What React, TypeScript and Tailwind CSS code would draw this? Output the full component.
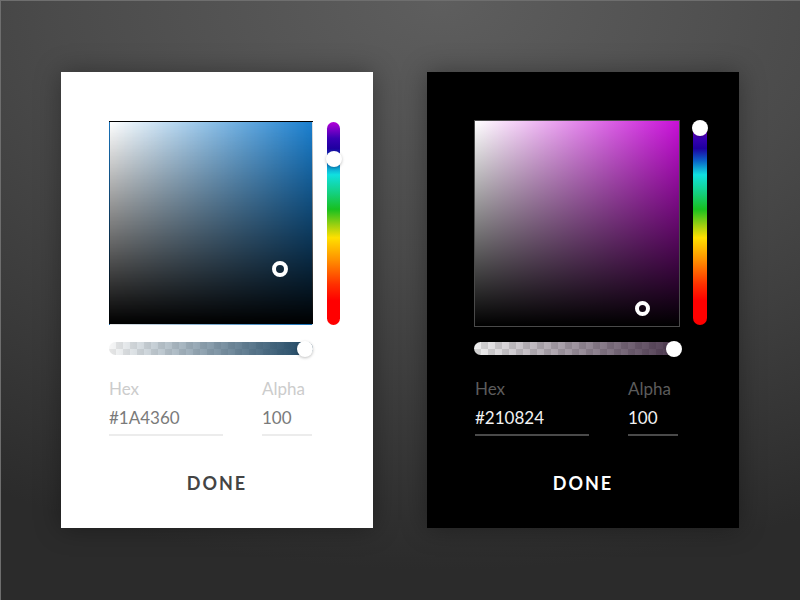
import React from "react";

type Theme = "light" | "dark";

type PickerProps = {
  theme: Theme;
  hex: string;
};

function ColorPicker({ theme, hex }: PickerProps) {
  const dark = theme === "dark";

  return (
    <div
      className={`w-[312px] h-[456px] flex flex-col shadow-[0_0_24px_rgba(0,0,0,0.35)] ${
        dark ? "bg-black pt-[48px] pl-[47px]" : "bg-white pt-[49px] pl-[48px]"
      }`}
    >
      {/* saturation square + hue bar */}
      <div className={`flex ${dark ? "gap-[13px]" : "gap-[14px]"}`}>
        {dark ? (
          <div className="relative w-[206px] h-[207px] border border-[#4a4a4a] [background-image:linear-gradient(to_top,#000,rgba(0,0,0,0)),linear-gradient(to_right,#fff,rgba(255,255,255,0)),linear-gradient(#c810d8,#c810d8)]">
            <div className="absolute left-[160px] top-[180px] w-[15px] h-[15px] rounded-full border-[4px] border-white" />
          </div>
        ) : (
          <div className="relative w-[204px] h-[204px] border border-black/10 [background-image:linear-gradient(to_top,#000,rgba(0,0,0,0)),linear-gradient(to_right,#fff,rgba(255,255,255,0)),linear-gradient(#1a80d0,#1a80d0)]">
            <div className="absolute left-[162px] top-[139px] w-[16px] h-[16px] rounded-full border-[4.5px] border-white" />
          </div>
        )}

        <div
          className={`relative h-[203px] rounded-full [background-image:linear-gradient(to_bottom,#b400d8_0%,#3a00b4_8%,#1e00a0_13%,#0a60c8_19%,#10e0e0_26%,#14d080_35%,#18c020_43%,#a0d010_51%,#ffe000_57%,#ff9000_68%,#ff3000_80%,#ff0000_88%,#ff0000_100%)] ${
            dark ? "w-[14px] mt-[2px]" : "w-[13px] mt-[1px]"
          }`}
        >
          <div
            className={`absolute left-1/2 -translate-x-1/2 w-4 h-4 rounded-full bg-white shadow-[0_1px_3px_rgba(0,0,0,0.25)] ${
              dark ? "-top-[2px]" : "top-[29px]"
            }`}
          />
        </div>
      </div>

      {/* alpha bar */}
      <div
        className={`relative h-[13px] rounded-full [background-size:100%_100%,14px_14px] ${
          dark
            ? "w-[206px] mt-[15px] [background-image:linear-gradient(to_right,rgba(33,8,36,0),rgba(33,8,36,0.8)),conic-gradient(#d4d4d4_25%,#efefef_0_50%,#d4d4d4_0_75%,#efefef_0)]"
            : "w-[204px] mt-[17px] [background-image:linear-gradient(to_right,rgba(26,67,96,0),#1a4360),conic-gradient(#e6e6e6_25%,#f7f7f7_0_50%,#e6e6e6_0_75%,#f7f7f7_0)]"
        }`}
      >
        <div
          className={`absolute top-1/2 -translate-y-1/2 w-4 h-4 rounded-full bg-white shadow-[0_1px_3px_rgba(0,0,0,0.25)] ${
            dark ? "left-[192px]" : "left-[188px]"
          }`}
        />
      </div>

      {/* fields */}
      <div
        className={`flex mt-[22px] [font-family:Lato,'Noto_Sans',sans-serif] text-[17px] leading-[24px] gap-[39px] ${
          dark ? "pl-[1px]" : ""
        }`}
      >
        <div className="w-[114px] flex flex-col">
          <span className={dark ? "text-[#5c5c5c]" : "text-[#cccccc]"}>Hex</span>
          <span
            className={`mt-[5px] pb-[4px] border-b-2 ${
              dark ? "text-[#f2f2f2] border-[#4a4a4a]" : "text-[#7a7a7a] border-[#ececec]"
            }`}
          >
            {hex}
          </span>
        </div>
        <div className="w-[50px] flex flex-col">
          <span className={dark ? "text-[#5c5c5c]" : "text-[#cccccc]"}>Alpha</span>
          <span
            className={`mt-[5px] pb-[4px] border-b-2 ${
              dark ? "text-[#f2f2f2] border-[#4a4a4a]" : "text-[#7a7a7a] border-[#ececec]"
            }`}
          >
            100
          </span>
        </div>
      </div>

      <div
        className={`mt-[35px] text-center [font-family:Lato,'Noto_Sans',sans-serif] font-bold text-[18px] leading-[24px] tracking-[2px] ${
          dark ? "text-white -ml-[47px]" : "text-[#444444] -ml-[48px]"
        }`}
      >
        DONE
      </div>
    </div>
  );
}

export default function App() {
  return (
    <div className="w-[800px] h-[600px] overflow-hidden border-t border-l border-[#6e6e6e] [background-image:radial-gradient(ellipse_110%_95%_at_55%_0%,#5e5e5e_0%,#4a4a4a_45%,#2b2b2b_100%)] flex gap-[54px] pl-[60px] pt-[71px]">
      <ColorPicker theme="light" hex="#1A4360" />
      <ColorPicker theme="dark" hex="#210824" />
    </div>
  );
}
